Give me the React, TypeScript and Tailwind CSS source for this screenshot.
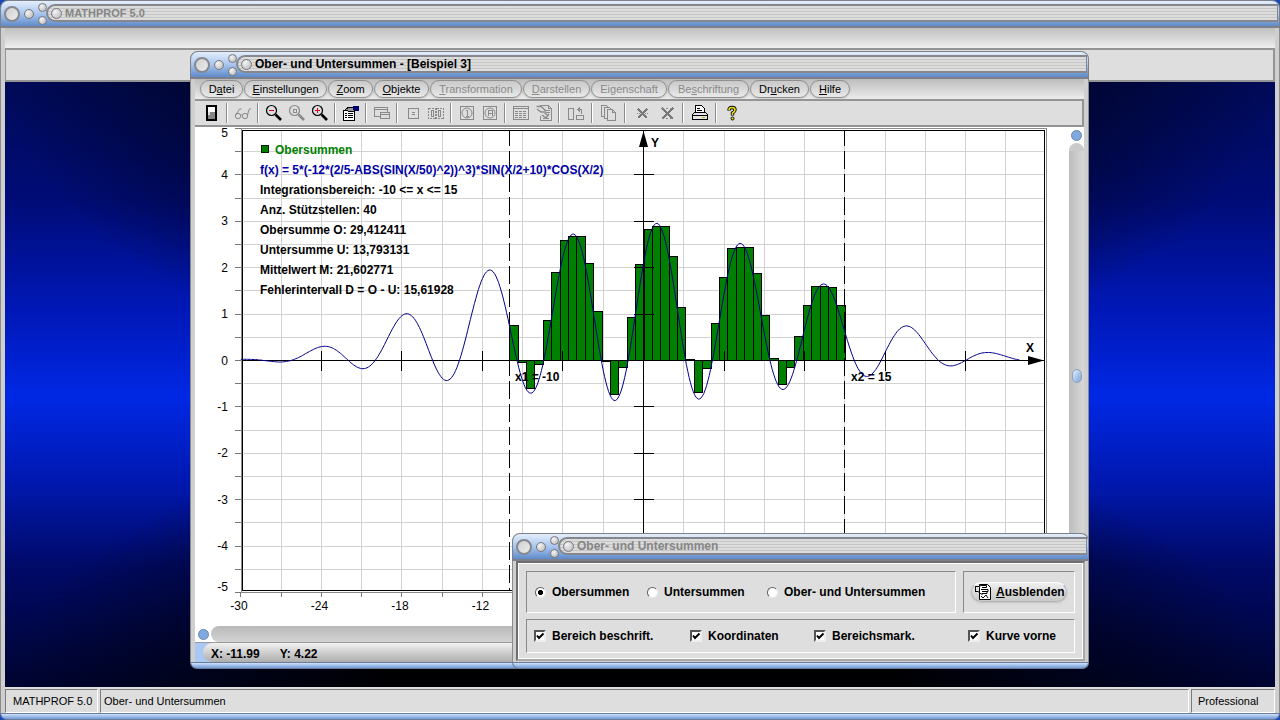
import { ReactNode, useState } from 'react'

// ---------- function + chart geometry ----------
const CHART_W = 874
const CHART_H = 499
const X_MIN = -30
const X_MAX = 30
const FROM = -10
const TO = 15
const STEPS = 40

const f = (x: number) =>
  5 * (-12 * Math.pow(2 / 5 - Math.abs(Math.sin(x / 50) ** 2), 3)) * Math.sin(x / 2 + 10) * Math.cos(x / 2)
const px = (x: number) => 448.5 + x * 13.42
const py = (y: number) => 233.5 - y * 46.4

const range = (from: number, to: number, step: number) => {
  const out: number[] = []
  for (let v = from; v <= to + 1e-9; v += step) out.push(v)
  return out
}

const curve = range(X_MIN, 28, 0.1)
  .map((x, i) => `${i ? 'L' : 'M'}${px(x).toFixed(1)} ${py(f(x)).toFixed(1)}`)
  .join('')

const barStep = (TO - FROM) / STEPS
const bars = Array.from({ length: STEPS }, (_, i) => {
  const a = FROM + i * barStep
  const v = Math.max(f(a), f(a + barStep))
  const left = Math.round(px(a))
  const right = Math.round(px(a + barStep))
  const top = Math.round(Math.min(py(v), 233))
  const bottom = Math.round(Math.max(py(v) - 1, 233))
  return { left, top, w: right - left, h: bottom - top }
})

const info = [
  'Integrationsbereich: -10 <= x <= 15',
  'Anz. Stützstellen: 40',
  'Obersumme O: 29,412411',
  'Untersumme U: 13,793131',
  'Mittelwert M: 21,602771',
  'Fehlerintervall D = O - U: 15,61928',
]

function Chart() {
  const x0 = px(0)
  const y0 = py(0)
  return (
    <svg viewBox={`0 0 ${CHART_W} ${CHART_H}`} className="block h-full w-full bg-white">
      <g shapeRendering="crispEdges" fill="none">
        {/* grid */}
        <g stroke="#d2d2d2">
          {range(-27, 27, 3).map(x => <line key={x} x1={px(x)} x2={px(x)} y1="4" y2="463" />)}
          {range(-4.5, 4.5, 0.5).map(y => <line key={y} x1="49" x2="849" y1={py(y)} y2={py(y)} />)}
        </g>
        {/* frame */}
        <path d="M46.5 1.5V465.5H851.5V1.5Z" stroke="#8a8a8a" />
        <path d="M47.5 3.5H849.5V463.5H47.5Z" stroke="#000" />
        <g stroke="#777">
          {range(-5, 5, 0.5).map(y => <line key={y} x1="40" x2="46" y1={py(y)} y2={py(y)} />)}
          {range(X_MIN, X_MAX, 3).map(x => <line key={x} x1={px(x)} x2={px(x)} y1="465" y2="470" />)}
        </g>
        {/* bars */}
        <g stroke="#000" fill="#008000">
          {bars.map(b => <rect key={b.left} x={b.left + 0.5} y={b.top + 0.5} width={b.w} height={b.h} />)}
        </g>
        {/* axes */}
        <g stroke="#000">
          <line x1="48" x2="849" y1={y0} y2={y0} />
          <line x1={x0} x2={x0} y1="4" y2="463" />
          {range(-24, 24, 6).map(x => <line key={x} x1={px(x)} x2={px(x)} y1={y0 - 10} y2={y0 + 10} />)}
          {range(-4, 4, 1).map(y => <line key={y} x1={x0 - 10} x2={x0 + 10} y1={py(y)} y2={py(y)} />)}
          <path d={`M${px(FROM)} 4V463M${px(TO)} 4V463`} strokeDasharray="18 5" strokeDashoffset="3" />
        </g>
      </g>
      <path d="M448.5 4L453 20H444Z" />
      <path d="M849 233.5L833 238V229Z" />

      <g className="text-[12px] font-bold">
        <text x="320" y="254">x1 = -10</text>
        <text x="656" y="254">x2 = 15</text>
        <text x="456" y="20">Y</text>
        <text x="831" y="225">X</text>
      </g>
      <path d={curve} fill="none" stroke="#00008b" strokeWidth="1" />

      {/* legend */}
      <rect x="66.5" y="18.5" width="7" height="7" fill="#008000" stroke="#002000" shapeRendering="crispEdges" />
      <g className="text-[12px] font-bold">
        <text x="80" y="27" fill="#008000">Obersummen</text>
        <text x="65" y="47" fill="#0000a8">f(x) = 5*(-12*(2/5-ABS(SIN(X/50)^2))^3)*SIN(X/2+10)*COS(X/2)</text>
        {info.map((line, i) => <text key={line} x="65" y={67 + i * 20}>{line}</text>)}
      </g>

      {/* scale labels */}
      <g className="text-[12px]">
        {range(-4, 4, 1).map(y => <text key={y} x="33" y={py(y) + 4} textAnchor="end">{y}</text>)}
        <text x="33" y="10" textAnchor="end">5</text>
        <text x="33" y="464" textAnchor="end">-5</text>
        {range(X_MIN, X_MAX, 6).map(x => <text key={x} x={px(x) - 2} y="483" textAnchor="middle">{x}</text>)}
      </g>
    </svg>
  )
}

// ---------- window chrome ----------
const knob = 'rounded-full border border-[#77797f] bg-radial-[at_35%_30%] from-[#f4f4f4] to-[#b4b4b4]'
const bigKnob = 'rounded-full border-2 border-[#85888f] bg-linear-to-br from-[#cfcfcf] to-[#ededed]'

function TitleBar({ title, text }: { title: string; text: string }) {
  return (
    <div className="flex h-7 shrink-0 items-center gap-1 rounded-t-lg border border-b-2 border-[#7d8088] bg-linear-to-b from-[#e4eefb] via-[#a9c6ee] to-[#5f8bc9] pl-[3px]">
      <button aria-label="Schließen" className={`size-4 ${bigKnob}`} />
      <button aria-label="Minimieren" className={`size-[10px] ${knob}`} />
      <div className="flex flex-col gap-1">
        <button aria-label="Maximieren" className={`size-[9px] ${knob}`} />
        <button aria-label="Wiederherstellen" className={`size-[9px] ${knob}`} />
      </div>
      <div className="-ml-[5px] mr-px mb-px flex h-[18px] flex-1 items-center gap-[3px] rounded-l-full rounded-r-sm border-2 border-r border-[#85878c] bg-[repeating-linear-gradient(to_bottom,#dcdcdc_0_2px,#c6c6c6_2px_3px)] pl-[3px]">
        <button aria-label="Menü" className={`size-[11px] ${knob}`} />
        <span className={`leading-none font-bold ${text}`}>{title}</span>
      </div>
    </div>
  )
}

const side = 'border-x-[#8b8b8b] bg-[#cfcfcf]'
const foot = 'h-[7px] shrink-0 rounded-b-lg border border-[#6c7d99] bg-linear-to-b from-[#cfe2fb] to-[#6f9ad6]'

// ---------- menu ----------
const menu = [
  { pre: 'D', key: 'a', post: 'tei', w: 'w-[43px]' },
  { pre: '', key: 'E', post: 'instellungen', w: 'w-[83px]' },
  { pre: '', key: 'Z', post: 'oom', w: 'w-[45px]' },
  { pre: '', key: 'O', post: 'bjekte', w: 'w-[55px]' },
  { pre: '', key: 'T', post: 'ransformation', w: 'w-[92px]', off: true },
  { pre: '', key: 'D', post: 'arstellen', w: 'w-[67px]', off: true },
  { pre: 'Ei', key: 'g', post: 'enschaft', w: 'w-[76px]', off: true },
  { pre: 'Be', key: 's', post: 'chriftung', w: 'w-[81px]', off: true },
  { pre: 'Dr', key: 'u', post: 'cken', w: 'w-[59px]' },
  { pre: '', key: 'H', post: 'ilfe', w: 'w-[40px]' },
]

function MenuBar() {
  return (
    <nav className="flex h-5 shrink-0 items-center gap-px bg-linear-to-b from-[#bdbdbd] to-[#ececec] pl-[5px]">
      {menu.map(m => (
        <button
          key={m.key + m.post}
          disabled={m.off}
          className={`${m.w} h-[18px] rounded-full border border-[#909090] bg-linear-to-b from-[#c9c9c9] to-[#e9e9e9] text-[11px] leading-none shadow-sm disabled:text-[#8a8a8a]`}
        >
          {m.pre}<u>{m.key}</u>{m.post}
        </button>
      ))}
    </nav>
  )
}

// ---------- toolbar ----------
const G = '#8a8a8a'

function Glyph({ children }: { children: ReactNode }) {
  return (
    <svg viewBox="0 0 18 18" className="size-[18px]" fill="none" shapeRendering="crispEdges">
      {children}
    </svg>
  )
}

const lens = (color: string, sign: ReactNode) => (
  <Glyph>
    <g shapeRendering="auto">
      <path d="M10.5 10.5L16 16" stroke={color} strokeWidth="2.6" />
      <circle cx="6.5" cy="6.5" r="5" stroke={color} strokeWidth="1.2" />
    </g>
    {sign}
  </Glyph>
)

const groups: { name: string; wide?: boolean; off?: boolean; icon: ReactNode }[][] = [
  [{ name: 'Beenden', icon: <Glyph><rect x="3" y="1" width="11" height="16" fill="#000" /><rect x="5" y="3" width="7" height="5" fill="#fff" /><rect x="5" y="8" width="7" height="7" fill="#858585" /><rect x="5" y="8" width="2" height="3" fill="#ddd" /></Glyph> }],
  [{ name: 'Ansicht', off: true, icon: <Glyph><g stroke={G} shapeRendering="auto"><circle cx="4" cy="12" r="2.7" /><circle cx="11" cy="12" r="2.7" /><path d="M6.5 11.5Q7.5 10 8.5 11.5M1.5 11L6 4.5 7.5 5.5M13.5 11L15 5.5 17 4.5" /></g></Glyph> }],
  [
    { name: 'Verkleinern', icon: lens('#000', <rect x="4" y="6" width="5" height="1" fill="#d00020" />) },
    { name: 'Zoom zurück', off: true, icon: lens(G, <rect x="5.5" y="5.5" width="3" height="3" stroke={G} />) },
    { name: 'Vergrößern', icon: lens('#000', <path d="M4 6.5H9M6.5 4V9" stroke="#d00020" />) },
  ],
  [{ name: 'Eigenschaften', icon: <Glyph><path d="M1.5 6.5H12.5V16.5H1.5Z" fill="#fff" stroke="#000" /><path d="M3 9.5H5M6 9.5H11M3 11.5H5M6 11.5H11M3 13.5H5M6 13.5H11" stroke="#000" /><path d="M3 6L7 3H12V7L9 8 6 7Z" fill="#999" stroke="#000" /><path d="M11 2H17V7H14L11 6Z" fill="#000070" /></Glyph> }],
  [{ name: 'Fenster', off: true, icon: <Glyph><path d="M1.5 3.5H14.5V12.5H1.5ZM1.5 5.5H14.5" stroke={G} /><path d="M7.5 8.5H16.5V14.5H7.5ZM8 10.5H16" fill="#dedede" stroke={G} /></Glyph> }],
  [
    { name: 'Punkt', off: true, icon: <Glyph><path d="M4.5 4.5H14.5V14.5H4.5ZM8 8.5H11M8 10.5H11" stroke={G} /></Glyph> },
    { name: 'Punkte', off: true, icon: <Glyph><path d="M1.5 4.5H8.5V14.5H1.5ZM9.5 4.5H16.5V14.5H9.5Z" stroke={G} strokeDasharray="2 1" /><path d="M4.5 6.5H6.5V12.5H4.5ZM11.5 6.5H13.5V12.5H11.5Z" stroke={G} /></Glyph> },
  ],
  [
    { name: 'Kreis 1', off: true, icon: <Glyph><path d="M2.5 2.5H15.5V15.5H2.5ZM9 6V12M8 6.5H9M7.5 12.5H11" stroke={G} /><circle cx="9" cy="9" r="5" stroke={G} shapeRendering="auto" /></Glyph> },
    { name: 'Kreis 2', off: true, icon: <Glyph><path d="M2.5 2.5H15.5V15.5H2.5ZM7 12V6.5H11V12M7 9.5H11" stroke={G} /><circle cx="9" cy="9" r="5" stroke={G} shapeRendering="auto" /></Glyph> },
  ],
  [
    { name: 'Tabelle', off: true, icon: <Glyph><path d="M1.5 2.5H16.5V15.5H1.5ZM2 4.5H16" stroke={G} /><path d="M3 7.5H15M3 9.5H15M3 11.5H15M3 13.5H15" stroke={G} strokeDasharray="3 1" /></Glyph> },
    { name: 'Wertetabelle', off: true, icon: <Glyph><path d="M5 1.5H13.5L16.5 4.5V16.5H5.5V12M13.5 1.5V4.5H16.5M10 6.5H15M11 8.5H15M8 14.5H14" stroke={G} /><path d="M1.5 2.5H6L10 6V9L13 12M2 5L6 8 9 8M7 11L11 14 14 10" stroke={G} strokeWidth="1.4" shapeRendering="auto" /></Glyph> },
  ],
  [{ name: 'Drehen', wide: true, off: true, icon: <Glyph><path d="M1.5 4.5H6.5V15.5H1.5ZM9.5 11.5H16.5V15.5H9.5ZM14.5 10V5.5H10M12 3V8M11 4V7" stroke={G} /></Glyph> }],
  [{ name: 'Kopieren', wide: true, off: true, icon: <Glyph><path d="M1.5 1.5H6.5L8.5 3.5V12.5H1.5Z" fill="#dedede" stroke={G} /><path d="M4.5 3.5H9.5L11.5 5.5V14.5H4.5Z" fill="#dedede" stroke={G} /><path d="M7.5 5.5H12.5L15.5 8.5V16.5H7.5ZM12.5 5.5V8.5H15.5" fill="#dedede" stroke={G} /></Glyph> }],
  [
    { name: 'Löschen', wide: true, off: true, icon: <Glyph><path d="M5 5L14 14M14 5L5 14" stroke="#777" strokeWidth="1.6" /><path d="M4 9.5H15" stroke={G} strokeDasharray="1 1" /></Glyph> },
    { name: 'Alle löschen', wide: true, off: true, icon: <Glyph><path d="M4 4L15 15M15 4L4 15" stroke="#777" strokeWidth="1.6" /><path d="M4 4.5H15M4 14.5H15" stroke={G} strokeDasharray="2 2" /></Glyph> },
  ],
  [{ name: 'Drucken', wide: true, icon: <Glyph><path d="M4.5 9V1.5H10.5L13.5 4.5V9M6 4.5H9M6 6.5H11" fill="#fff" stroke="#000" /><path d="M1.5 10.5L3.5 8.5H14.5L16.5 10.5V15.5H1.5Z" fill="#e6e6e6" stroke="#000" /><path d="M1 11.5H17M2 15.5H16" stroke="#000" /><path d="M11 13.5H14" stroke="#c8b400" /></Glyph> }],
  [{ name: 'Hilfe', wide: true, icon: <Glyph><g shapeRendering="auto"><path d="M5 6.5Q5 3.5 8 3.5T11 6Q11 7.5 8.5 9V11.5" stroke="#000" strokeWidth="3.4" /><path d="M5 6Q5 3.5 8 3.5T11 6Q11 7.5 8.5 9V11" stroke="#ece000" strokeWidth="1.6" /><circle cx="8.5" cy="14.5" r="1.5" fill="#ece000" stroke="#000" /></g></Glyph> }],
]

function Toolbar() {
  return (
    <div className="flex h-7 shrink-0 items-center border-y-2 border-r-2 border-[#949494] bg-[#dedede] pl-[5px]">
      {groups.map((group, i) => (
        <div key={group[0].name} className="flex items-center">
          {i > 0 && <span className="mx-[3px] h-5 w-[2px] border-r border-l border-r-white border-l-[#8a8a8a]" />}
          {group.map(t => (
            <button key={t.name} aria-label={t.name} disabled={t.off} className={`flex h-6 items-center justify-center ${t.wide ? 'w-[25px]' : 'w-[23px]'}`}>
              {t.icon}
            </button>
          ))}
        </div>
      ))}
    </div>
  )
}

// ---------- dialog ----------
const panel = 'border border-t-[#8a8a8a] border-l-[#8a8a8a] border-r-white border-b-white'

const modes = [
  { label: 'Obersummen', w: 'w-[112px]' },
  { label: 'Untersummen', w: 'w-[120px]' },
  { label: 'Ober- und Untersummen', w: '' },
]

const options = [
  { label: 'Bereich beschrift.', w: 'w-[156px]' },
  { label: 'Koordinaten', w: 'w-[124px]' },
  { label: 'Bereichsmark.', w: 'w-[154px]' },
  { label: 'Kurve vorne', w: '' },
]

function Dialog() {
  const [mode, setMode] = useState('Obersummen')
  return (
    <section className="absolute top-[533px] left-[512px] flex h-[136px] w-[577px] flex-col">
      <TitleBar title="Ober- und Untersummen" text="text-[12px] text-[#858585]" />
      <div className={`flex flex-1 border-x px-[3px] pb-px ${side}`}>
        <div className="flex flex-1 flex-col gap-[6px] border-2 border-t-[#6f6f6f] border-r-[#a8a8a8] border-b-[#a8a8a8] border-l-[#6f6f6f] bg-[#dedede] px-2 pt-2 shadow-[inset_1px_1px_0_#fff,inset_-1px_-1px_0_#fff]">
          <div className="flex h-[42px] gap-[7px]">
            <div className={`flex flex-1 items-center pl-2 ${panel}`}>
              {modes.map(m => (
                <label key={m.label} className={`${m.w} flex items-center gap-[6px] text-[12px] leading-none font-bold`}>
                  <input
                    type="radio"
                    name="mode"
                    checked={mode === m.label}
                    onChange={() => setMode(m.label)}
                    className="size-[11px] appearance-none rounded-full border border-t-[#606060] border-r-[#e8e8e8] border-b-[#e8e8e8] border-l-[#606060] bg-white checked:bg-radial checked:from-black checked:from-35% checked:to-white checked:to-45%"
                  />
                  {m.label}
                </label>
              ))}
            </div>
            <div className={`flex w-[112px] items-center justify-center ${panel}`}>
              <button className="flex h-5 w-24 items-center gap-1 rounded-full border border-[#b5b5b5] border-t-white bg-linear-to-b from-[#efefef] to-[#c8c8c8] pl-[2px] text-[12px] font-bold shadow">
                <svg viewBox="0 0 18 18" className="size-[18px] shrink-0" fill="none" stroke="#000">
                  <path d="M5.5 1.5H13.5L16.5 4.5V16.5H5.5Z" fill="#fff" />
                  <path d="M1.5 3V9M1.5 3.5H5L7 2.5H12.5V4.5H8M7 6.5H14V8.5H8M8 10.5H13V8.5M1.5 8.5H4L7 11H9" fill="#fff" />
                  <path d="M7 13L9 15 12 12 14 15" />
                </svg>
                <span><u>A</u>usblenden</span>
              </button>
            </div>
          </div>
          <div className={`flex h-[34px] items-center pl-[7px] ${panel}`}>
            {options.map(o => (
              <label key={o.label} className={`${o.w} flex items-center gap-[6px] text-[12px] leading-none font-bold`}>
                <span className="relative flex">
                  <input type="checkbox" defaultChecked className="peer size-3 appearance-none border-2 border-t-[#555] border-r-[#eee] border-b-[#eee] border-l-[#555] bg-white" />
                  <svg viewBox="0 0 12 12" className="pointer-events-none absolute inset-0 hidden size-3 peer-checked:block">
                    <path d="M3 5.5L5 8L9.5 3.5" fill="none" stroke="#000" strokeWidth="2" />
                  </svg>
                </span>
                {o.label}
              </label>
            ))}
          </div>
        </div>
      </div>
      <div className={foot} />
    </section>
  )
}

function ChartWindow() {
  return (
    <section className="absolute top-[51px] left-[190px] flex h-[618px] w-[899px] flex-col">
      <TitleBar title="Ober- und Untersummen - [Beispiel 3]" text="text-[12px] text-black" />
      <div className={`flex flex-1 flex-col border-x px-1 ${side}`}>
        <MenuBar />
        <Toolbar />
        <div className="flex min-h-0 flex-1">
          <div className="min-w-0 flex-1"><Chart /></div>
          {/* vertical scrollbar */}
          <div className="flex w-[15px] flex-col items-center bg-linear-to-r from-[#bdbdbd] to-[#d8d8d8]">
            <div className="w-full bg-white">
              <div className="flex h-4 items-center justify-center">
                <span className="size-[11px] rounded-full border border-[#6c86ad] bg-[#7fa9e0]" />
              </div>
              <div className="h-2 rounded-t-full bg-[#cacaca]" />
            </div>
            <span className="mt-[218px] h-[14px] w-[10px] rounded-md border border-[#8aa2c4] bg-linear-to-br from-[#e3eefc] to-[#7da3d6]" />
          </div>
        </div>
        {/* horizontal scrollbar */}
        <div className="flex h-4 shrink-0 items-center bg-white">
          <div className="flex w-4 items-center justify-center">
            <span className="size-[11px] rounded-full border border-[#6c86ad] bg-[#7fa9e0]" />
          </div>
          <div className="h-full flex-1 rounded-l-full bg-linear-to-b from-[#b9b9b9] to-[#d3d3d3]" />
        </div>
        <div className="flex h-5 shrink-0 border-t border-[#9a9a9a] bg-[#a9c8f2] pl-2">
          <div className="flex flex-1 items-center gap-5 rounded-l-full bg-linear-to-b from-[#f2f2f2] to-[#adadad] pt-[2px] pl-2 text-[12px] leading-none font-bold">
            <span>X: -11.99</span>
            <span>Y: 4.22</span>
          </div>
        </div>
      </div>
      <div className={foot} />
    </section>
  )
}

const cell = 'flex items-center border border-t-[#7c7c7c] border-l-[#7c7c7c] border-r-white border-b-white'

export default function App() {
  return (
    <div className="relative flex h-screen w-full flex-col overflow-hidden bg-[#1b48b8] font-['Liberation_Sans',Arial,sans-serif] text-black">
      <TitleBar title="MATHPROF 5.0" text="text-[11px] text-[#858585]" />
      <div className={`flex min-h-0 flex-1 flex-col border-x px-1 ${side}`}>
        <div className="h-5 shrink-0 bg-linear-to-b from-[#c0c0c0] to-[#eeeeee]" />
        <div className="h-[34px] shrink-0 border-2 border-l border-[#949494] bg-[#dedede]" />
        <main className="flex-1 bg-[radial-gradient(ellipse_50%_50%_at_50%_0%,rgba(0,0,0,0.85)_40%,transparent),radial-gradient(ellipse_50%_45%_at_50%_100%,rgba(0,0,0,0.95)_40%,transparent),linear-gradient(to_bottom,#000a58,#000c78_20%,#0018b8_38%,#0028e4_52%,#0018b0_66%,#000a68_80%,#000430)]" />
        <footer className="flex h-[26px] shrink-0 gap-[2px] bg-[#dedede] pt-[2px] text-[11px]">
          <div className={`${cell} w-[93px] pl-[7px]`}>MATHPROF 5.0</div>
          <div className={`${cell} flex-1 pl-[3px]`}>Ober- und Untersummen</div>
          <div className={`${cell} w-[84px] pl-[6px]`}>Professional</div>
        </footer>
      </div>
      <div className={foot} />
      <ChartWindow />
      <Dialog />
    </div>
  )
}
